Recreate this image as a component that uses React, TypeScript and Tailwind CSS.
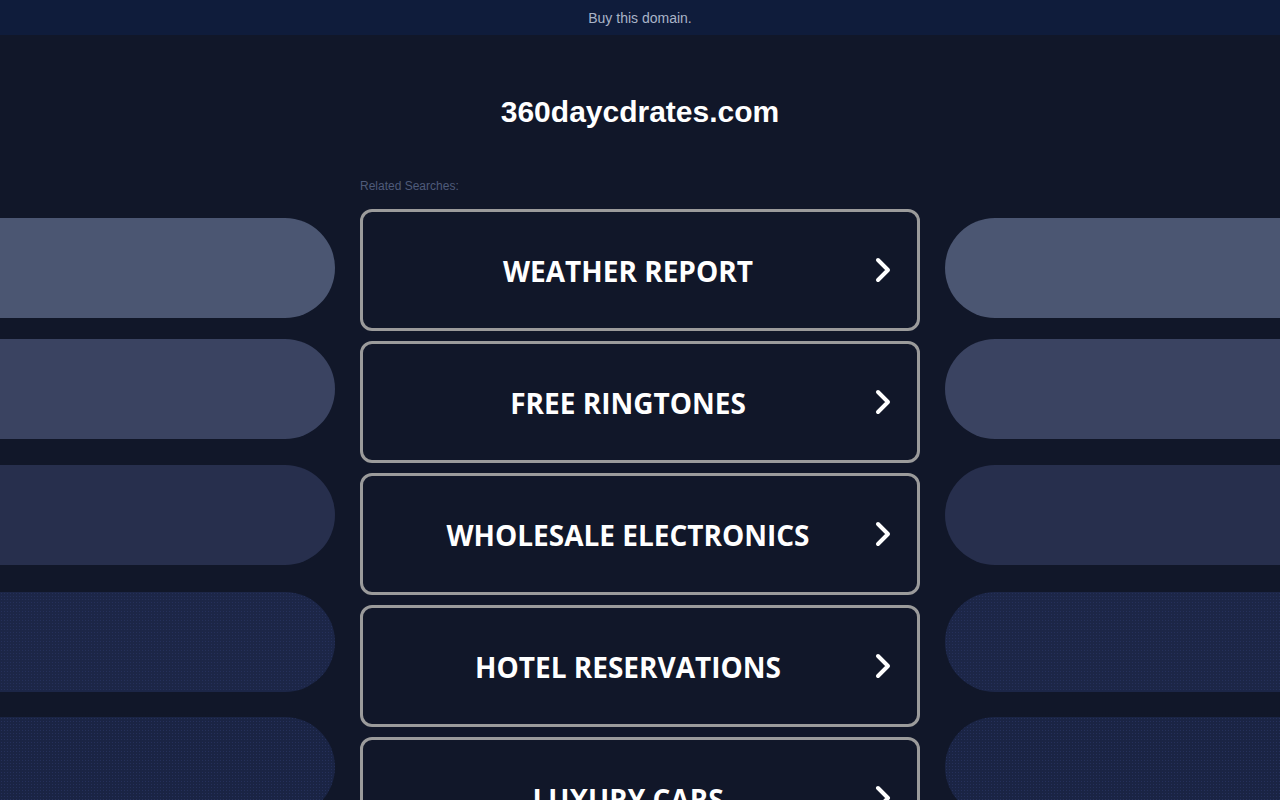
import React from 'react'

const searches = [
    'WEATHER REPORT',
    'FREE RINGTONES',
    'WHOLESALE ELECTRONICS',
    'HOTEL RESERVATIONS',
    'LUXURY CARS',
]

// dekorasi kiri/kanan
const pills = [
    { color: 'bg-[#4b5672]', mt: 'mt-[9px]' },
    { color: 'bg-[#3a4361]', mt: 'mt-[21px]' },
    { color: 'bg-[#272f4d]', mt: 'mt-[26px]' },
    { color: 'bg-[#1c2647] bg-[radial-gradient(circle,#25305a_0.6px,transparent_0.8px)] bg-[length:3px_3px]', mt: 'mt-[27px]' },
    { color: 'bg-[#1a2444] bg-[radial-gradient(circle,#25305a_0.6px,transparent_0.8px)] bg-[length:3px_3px]', mt: 'mt-[25px]' },
]

function Chevron() {
    return (
        <svg width="22" height="28" viewBox="0 0 22 28" fill="none" className="absolute right-[23px] top-1/2 -translate-y-1/2">
            <path d="M6 4 L16 14 L6 24" stroke="white" strokeWidth="4" strokeLinecap="round" strokeLinejoin="round" />
        </svg>
    )
}

function SideColumn({ side }: { side: 'left' | 'right' }) {
    return (
        <div className="w-[335px] flex flex-col">
            {pills.map((p, i) => (
                <div
                    key={i}
                    className={`${p.mt} h-[100px] shrink-0 ${p.color} ${side === 'left' ? 'rounded-r-[50px]' : 'rounded-l-[50px]'}`}
                />
            ))}
        </div>
    )
}

export default function App() {
    return (
        <div className="w-[1280px] h-[800px] overflow-hidden bg-[#111729] font-['Liberation_Sans',Arial,sans-serif]">
            <div className="h-[35px] pt-[1px] bg-[#0f1c3b] flex items-center justify-center text-[14px] text-[#a9b4c8]">
                Buy this domain.
            </div>

            <h1 className="mt-[60px] text-center text-[30px] leading-[34px] font-bold text-white">
                360daycdrates.com
            </h1>

            <div className="mt-[49px] w-[560px] mx-auto text-[12px] leading-[16px] text-[#4f5b7a]">
                Related Searches:
            </div>

            <div className="mt-[15px] flex gap-[25px]">
                <SideColumn side="left" />
                <div className="w-[560px] flex flex-col gap-[10px]">
                    {searches.map((s) => (
                        <a
                            key={s}
                            href="#"
                            className="relative h-[122px] shrink-0 border-[3px] border-[#9b9b9b] rounded-[12px] flex items-center justify-center pr-[24px] pt-[2px] text-[28px] font-bold text-white font-['Open_Sans','Noto_Sans',sans-serif]"
                        >
                            {s}
                            <Chevron />
                        </a>
                    ))}
                </div>
                <SideColumn side="right" />
            </div>
        </div>
    )
}
